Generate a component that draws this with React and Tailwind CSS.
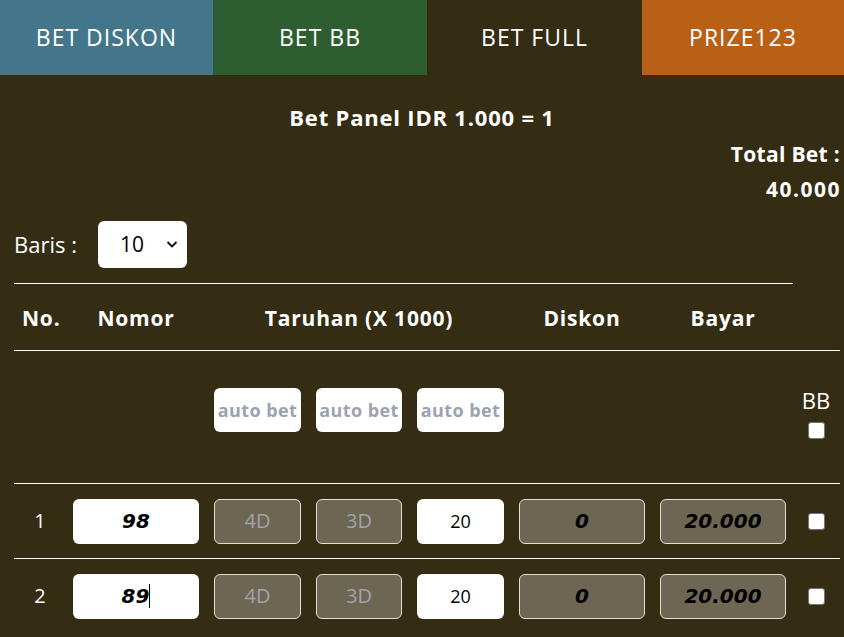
import React from "react"

const Tab = ({ label, className }) => (
  <div className={`h-[75px] flex items-center justify-center text-white text-[23px] tracking-[1px] ${className}`}>
    {label}
  </div>
)

const WhiteBox = ({ children, w }) => (
  <div className={`${w} h-[45px] bg-white rounded-[6px] flex items-center justify-center`}>{children}</div>
)

const GrayBox = ({ children, w }) => (
  <div className={`${w} h-[45px] bg-[#6c6653] border border-[#e2ded3] rounded-[6px] flex items-center justify-center`}>{children}</div>
)

const Check = () => (
  <div className="w-[17px] h-[17px] bg-white rounded-[3px] border border-[#767676]" />
)

const Row = ({ no, nomor, caret }) => (
  <div className="flex items-center gap-[15px] h-[75px] border-t border-white">
    <div className="w-[44px] pl-[8px] text-center text-[20px] text-white">{no}</div>
    <WhiteBox w="w-[126px]">
      <span className="font-['DejaVu_Sans',sans-serif] font-bold italic text-[20px] text-black">{nomor}</span>
      {caret && <span className="w-px h-[24px] bg-black" />}
    </WhiteBox>
    <GrayBox w="w-[87px]"><span className="text-[20px] text-[#a0a3ab]">4D</span></GrayBox>
    <GrayBox w="w-[86px]"><span className="text-[20px] text-[#a0a3ab]">3D</span></GrayBox>
    <WhiteBox w="w-[87px]"><span className="font-['Open_Sans',sans-serif] text-[18px] text-black">20</span></WhiteBox>
    <GrayBox w="w-[126px]"><span className="font-['DejaVu_Sans',sans-serif] font-bold italic text-[20px] text-black">0</span></GrayBox>
    <GrayBox w="w-[126px]"><span className="font-['DejaVu_Sans',sans-serif] font-bold italic text-[20px] text-black">20.000</span></GrayBox>
    <div className="flex-1 flex justify-center pr-[8px]"><Check /></div>
  </div>
)

const App = () => {
  return (
    <div className="w-[844px] h-[637px] overflow-hidden bg-[#352c14] font-['Open_Sans',sans-serif]">
      <div className="flex">
        <Tab label="BET DISKON" className="w-[213px] bg-[#43768a]" />
        <Tab label="BET BB" className="w-[214px] bg-[#2e5e2f]" />
        <Tab label="BET FULL" className="w-[215px] bg-[#352c14]" />
        <Tab label="PRIZE123" className="flex-1 bg-[#b96017]" />
      </div>

      <div className="pt-[28px] text-center text-white font-bold text-[22px] leading-[28px] tracking-[0.8px]">Bet Panel IDR 1.000 = 1</div>
      <div className="mt-[6px] pr-[4px] text-right text-white font-bold text-[21px] leading-[35px]">
        <div className="tracking-[0.3px]">Total Bet :</div>
        <div className="tracking-[1.5px] -mr-[1px]">40.000</div>
      </div>

      <div className="pl-[14px] pr-[4px]">
        <div className="mt-[14px] flex items-center gap-[21px]">
          <span className="text-white text-[22px]">Baris :</span>
          <div className="relative w-[89px] h-[47px] bg-white rounded-[6px] flex items-center pl-[22px] text-[21px] text-black">
            10
            <svg className="absolute right-[9px] top-[19px]" width="12" height="9" viewBox="0 0 12 9">
              <path d="M1.5 2 L6 6.5 L10.5 2" fill="none" stroke="#111" strokeWidth="1.8" />
            </svg>
          </div>
        </div>

        <div className="mt-[15px] w-[779px] border-t border-white" />
        <div className="flex items-center gap-[15px] h-[66px] pt-[3px] text-white font-bold text-[21px] tracking-[0.8px] whitespace-nowrap">
          <div className="w-[44px] pl-[8px] text-center">No.</div>
          <div className="w-[126px] text-center">Nomor</div>
          <div className="w-[290px] text-center">Taruhan (X 1000)</div>
          <div className="w-[126px] text-center">Diskon</div>
          <div className="w-[126px] text-center">Bayar</div>
        </div>

        <div className="flex items-start gap-[15px] h-[133px] border-t border-white">
          <div className="w-[44px]" />
          <div className="w-[126px]" />
          {[87, 86, 87].map((w, i) => (
            <div key={i} className={`${w === 86 ? "w-[86px]" : "w-[87px]"} mt-[37px] h-[44px] bg-white rounded-[6px] flex items-center justify-center text-[18px] font-bold text-[#9ca3af] whitespace-nowrap tracking-[0.4px]`}>
              auto bet
            </div>
          ))}
          <div className="w-[126px]" />
          <div className="w-[126px]" />
          <div className="flex-1 flex flex-col items-center pt-[35px] pr-[9px]">
            <span className="text-white text-[22px] leading-[28px]">BB</span>
            <div className="mt-[8px]"><Check /></div>
          </div>
        </div>

        <Row no="1" nomor="98" />
        <Row no="2" nomor="89" caret />
      </div>
    </div>
  )
}

export default App
